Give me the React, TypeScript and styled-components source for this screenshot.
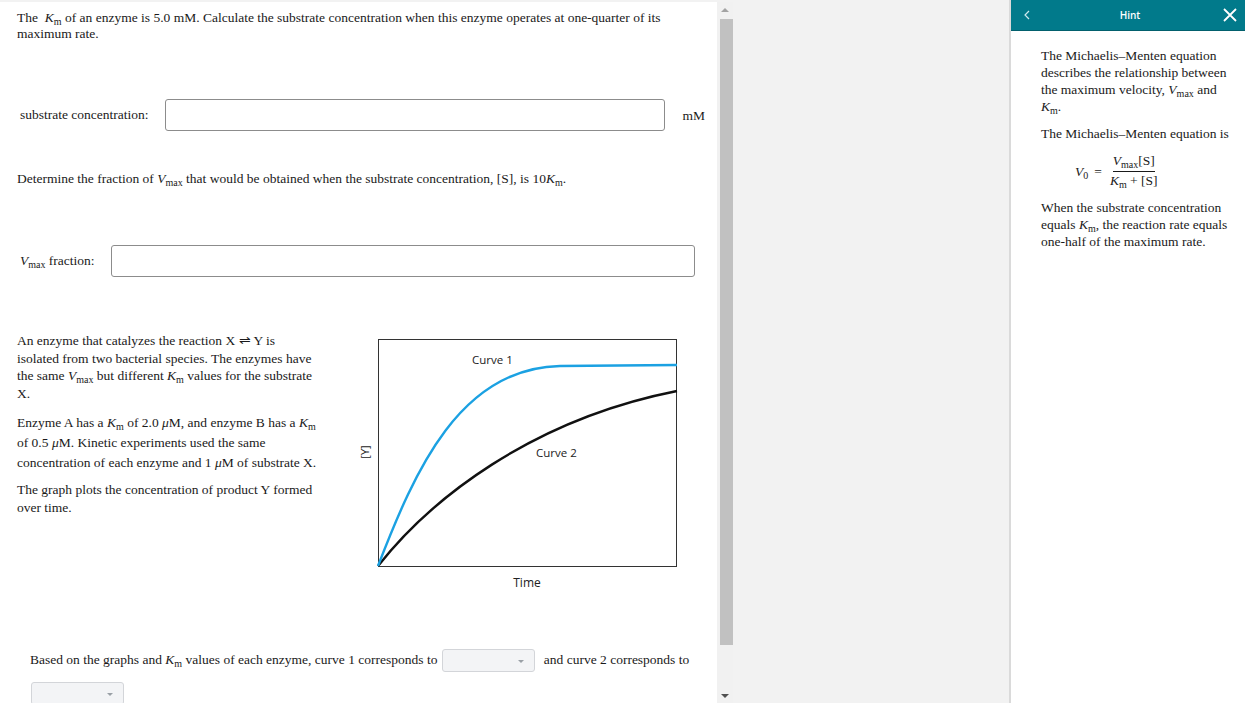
import styled, { createGlobalStyle } from "styled-components";

const GlobalStyle = createGlobalStyle`
  html, body {
    margin: 0;
    padding: 0;
    background: #f2f2f2;
  }
  body {
    font-family: "Liberation Serif", "Times New Roman", serif;
    color: #1a1a1a;
  }
`;

const Page = styled.div`
  display: grid;
  grid-template-columns: 717px 16px 276px 236px;
  height: 703px;
  overflow: hidden;
`;

const Pane = styled.div`
  margin-top: 2px;
  background: white;
  padding: 8px 22px 0 17px;
  font-size: 13.5px;
  line-height: 16px;
  overflow: hidden;
`;

const Question = styled.p<{ $top?: number }>`
  margin: ${(p) => p.$top ?? 0}px 0 0;
`;

const AnswerRow = styled.div<{ $top: number }>`
  display: flex;
  align-items: center;
  gap: 16px;
  margin-top: ${(p) => p.$top}px;
  padding-left: 3px;
`;

const Label = styled.span`
  white-space: nowrap;
`;

const TextBox = styled.div<{ $width: number }>`
  flex-shrink: 0;
  width: ${(p) => p.$width}px;
  height: 32px;
  box-sizing: border-box;
  border: 1px solid #8c8c8c;
  border-radius: 3px;
  background: white;
`;

const Unit = styled.span`
  margin-left: 2px;
  padding-top: 2px;
  white-space: nowrap;
`;

const Var = styled.i`
  font-style: italic;
`;

const Sub = styled.sub`
  font-size: 10px;
  line-height: 0;
  vertical-align: -3px;
`;

const Scenario = styled.div`
  display: flex;
  gap: 13px;
  margin-top: 55px;
`;

const ScenarioText = styled.div`
  width: 320px;
  flex-shrink: 0;
  line-height: 17.5px;
  white-space: nowrap;
`;

const Para = styled.p<{ $lh?: number; $after?: number }>`
  margin: 0 0 ${(p) => p.$after ?? 11}px;
  line-height: ${(p) => p.$lh ?? 17.5}px;
`;

const Graph = styled.svg`
  display: block;
  margin-top: 3px;
  font-family: "Open Sans", "Liberation Sans", sans-serif;
`;

const Closing = styled.div`
  margin-top: 43px;
  padding-left: 13px;
  line-height: 33px;
`;

const Select = styled.span<{ $indent?: number }>`
  display: inline-flex;
  align-items: center;
  justify-content: flex-end;
  vertical-align: middle;
  width: 93px;
  height: 23px;
  box-sizing: border-box;
  margin: 0 5px 0 ${(p) => p.$indent ?? 5}px;
  padding-right: 10px;
  border: 1px solid #d3d5d9;
  border-radius: 3px;
  background: #f3f4f6;
  &::after {
    content: "";
    border-left: 3px solid transparent;
    border-right: 3px solid transparent;
    border-top: 3px solid #9aa0a6;
    margin-top: 2px;
  }
`;

const Scrollbar = styled.div`
  display: flex;
  flex-direction: column;
  align-items: center;
  background: #f1f1f1;
  margin-top: 2px;
`;

const Arrow = styled.div<{ $down?: boolean }>`
  width: 0;
  height: 0;
  border-left: 4px solid transparent;
  border-right: 4px solid transparent;
  ${(p) =>
    p.$down
      ? "border-top: 4px solid #505050; margin-top: auto; margin-bottom: 5px;"
      : "border-bottom: 4px solid #a3a3a3; margin-top: 6px;"}
`;

const Thumb = styled.div`
  width: 13px;
  height: 626px;
  margin: 7px 0 0 3px;
  background: #c1c1c1;
`;

const Gutter = styled.div`
  background: #f2f2f2;
`;

const HintPanel = styled.aside`
  display: flex;
  flex-direction: column;
  background: white;
  border-left: 2px solid #dadada;
  font-size: 13.5px;
  line-height: 17px;
`;

const HintHeader = styled.div`
  display: flex;
  align-items: center;
  justify-content: space-between;
  height: 30px;
  padding: 0 8px 0 12px;
  background: #017a8b;
  border-bottom: 1px solid #02606d;
  color: white;
`;

const HeaderTitle = styled.span`
  font-family: "Open Sans", "Liberation Sans", sans-serif;
  font-size: 10px;
  font-weight: 600;
  margin-left: 6px;
`;

const HintBody = styled.div`
  padding: 16px 10px 0 30px;
  white-space: nowrap;
`;

const HintPara = styled.p`
  margin: 0 0 10px;
`;

const Equation = styled.div`
  display: flex;
  align-items: center;
  gap: 6px;
  padding-left: 34px;
  margin: 9px 0 9px;
`;

const Fraction = styled.span`
  display: inline-flex;
  flex-direction: column;
  align-items: center;
  padding: 0 2px;
  line-height: 18px;
`;

const Numerator = styled.span`
  padding-bottom: 1px;
  border-bottom: 1px solid #1a1a1a;
`;

const Km = () => (
  <>
    <Var>K</Var>
    <Sub>m</Sub>
  </>
);

const Vmax = () => (
  <>
    <Var>V</Var>
    <Sub>max</Sub>
  </>
);

const App = () => (
  <>
    <GlobalStyle />
    <Page>
      <Pane>
        <Question>
          The&nbsp; <Km /> of an enzyme is 5.0 mM. Calculate the substrate concentration when this enzyme operates
          at one-quarter of its
          <br />
          maximum rate.
        </Question>
        <AnswerRow $top={57}>
          <Label>substrate concentration:</Label>
          <TextBox $width={500} />
          <Unit>mM</Unit>
        </AnswerRow>
        <Question $top={40}>
          Determine the fraction of <Vmax /> that would be obtained when the substrate concentration, [S], is 10
          <Km />.
        </Question>
        <AnswerRow $top={58}>
          <Label>
            <Vmax /> fraction:
          </Label>
          <TextBox $width={584} />
        </AnswerRow>
        <Scenario>
          <ScenarioText>
            <Para>
              An enzyme that catalyzes the reaction X ⇌ Y is
              <br />
              isolated from two bacterial species. The enzymes have
              <br />
              the same <Vmax /> but different <Km /> values for the substrate
              <br />
              X.
            </Para>
            <Para $lh={20} $after={8}>
              Enzyme A has a <Km /> of 2.0 <Var>μ</Var>M, and enzyme B has a <Km />
              <br />
              of 0.5 <Var>μ</Var>M. Kinetic experiments used the same
              <br />
              concentration of each enzyme and 1 <Var>μ</Var>M of substrate X.
            </Para>
            <Para>
              The graph plots the concentration of product Y formed
              <br />
              over time.
            </Para>
          </ScenarioText>
          <Graph width="345" height="265" viewBox="350 335 345 265">
            <rect x="378.5" y="339.5" width="298" height="227" fill="none" stroke="#333" strokeWidth="1" />
            <path d="M378,566 C430,500 530,420 677,391" fill="none" stroke="#111" strokeWidth="2.4" />
            <path d="M378,566 C415,470 460,368 560,366 L677,365" fill="none" stroke="#1ba1e2" strokeWidth="2.4" />
            <text x="472" y="364" fontSize="11.5" fill="#222">Curve 1</text>
            <text x="536" y="457" fontSize="11.5" fill="#222">Curve 2</text>
            <text x="527" y="587" fontSize="12" fill="#222" textAnchor="middle">Time</text>
            <text x="369" y="452" fontSize="11" fill="#222" textAnchor="middle" transform="rotate(-90 369 452)">
              [Y]
            </text>
          </Graph>
        </Scenario>
        <Closing>
          Based on the graphs and <Km /> values of each enzyme, curve 1 corresponds to
          <Select /> and curve 2 corresponds to
          <br />
          <Select $indent={1} />
        </Closing>
      </Pane>
      <Scrollbar>
        <Arrow />
        <Thumb />
        <Arrow $down />
      </Scrollbar>
      <Gutter />
      <HintPanel>
        <HintHeader>
          <svg width="8" height="10" viewBox="0 0 8 10">
            <path d="M6 1 L2 5 L6 9" fill="none" stroke="#cde9ee" strokeWidth="1.2" />
          </svg>
          <HeaderTitle>Hint</HeaderTitle>
          <svg width="14" height="14" viewBox="0 0 14 14">
            <path d="M1 1 L13 13 M13 1 L1 13" stroke="white" strokeWidth="1.8" />
          </svg>
        </HintHeader>
        <HintBody>
          <HintPara>
            The Michaelis–Menten equation
            <br />
            describes the relationship between
            <br />
            the maximum velocity, <Vmax /> and
            <br />
            <Km />.
          </HintPara>
          <HintPara>The Michaelis–Menten equation is</HintPara>
          <Equation>
            <span>
              <Var>V</Var>
              <Sub>0</Sub>
            </span>
            <span>=</span>
            <Fraction>
              <Numerator>
                <Vmax />
                [S]
              </Numerator>
              <span>
                <Km /> + [S]
              </span>
            </Fraction>
          </Equation>
          <HintPara>
            When the substrate concentration
            <br />
            equals <Km />, the reaction rate equals
            <br />
            one-half of the maximum rate.
          </HintPara>
        </HintBody>
      </HintPanel>
    </Page>
  </>
);

export default App;
